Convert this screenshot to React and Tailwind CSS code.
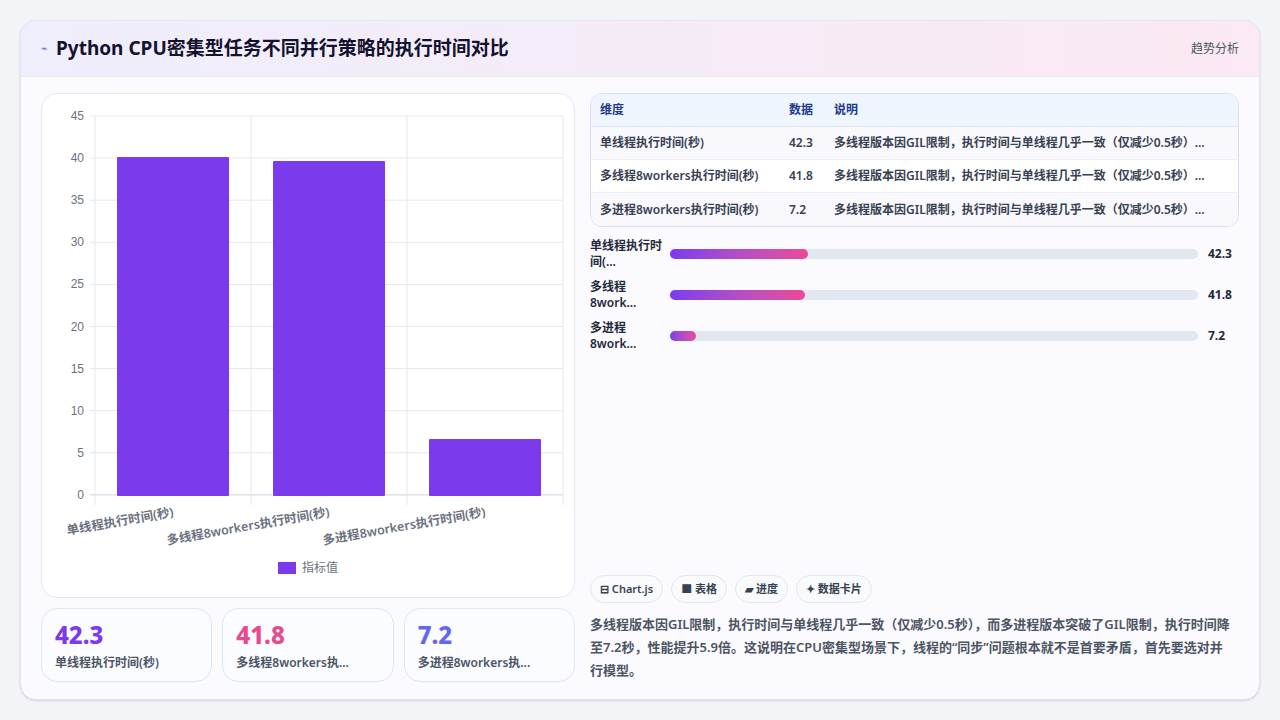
export default function App() {
  const F = { fontFamily: '"Noto Sans", "Noto Sans CJK SC", sans-serif' };
  const rows = [
    ["单线程执行时间(秒)", "42.3"],
    ["多线程8workers执行时间(秒)", "41.8"],
    ["多进程8workers执行时间(秒)", "7.2"],
  ];
  const desc = "多线程版本因GIL限制，执行时间与单线程几乎一致（仅减少0.5秒）...";
  const bars = [
    ["单线程执行时间(...", "42.3", 138],
    ["多线程 8work...", "41.8", 135],
    ["多进程 8work...", "7.2", 26],
  ];
  const gridY = [45, 40, 35, 30, 25, 20, 15, 10, 5, 0];
  return (
    <div style={F} className="w-[1280px] h-[720px] bg-[#f3f4f8] p-5">
      <div className="h-[680px] rounded-2xl border border-[#e3e1f3] bg-[#fbfaff] overflow-hidden flex flex-col shadow-sm">
        <div className="h-[56px] shrink-0 flex items-center justify-between px-5 bg-gradient-to-r from-[#efeefc] to-[#fbe9f3] border-b border-[#ebe6f5]">
          <div className="flex items-center gap-2">
            <span className="text-[#6366f1] text-[11px]">⌁</span>
            <span className="text-[19px] font-bold text-[#14122e]">Python CPU密集型任务不同并行策略的执行时间对比</span>
          </div>
          <span className="text-[12px] text-[#4b5563]">趋势分析</span>
        </div>
        <div className="flex gap-[15px] px-5 pt-4 flex-1">
          <div className="w-[534px] flex flex-col gap-[10px]">
            <div className="h-[505px] rounded-2xl border border-[#e4e7f2] bg-white relative">
              <svg width="534" height="505" className="absolute left-0 top-0">
                {gridY.map((v, i) => {
                  const y = 22 + i * 42.1;
                  return (
                    <g key={v}>
                      <line x1="48" x2="521" y1={y} y2={y} stroke={v === 0 ? "#cbd5e1" : "#e5e7eb"} />
                      <text x="42" y={y + 4} textAnchor="end" fontSize="12" fill="#6b7280" fontFamily="Liberation Sans, sans-serif">{v}</text>
                    </g>
                  );
                })}
                {[53, 209, 365, 521].map((x) => (
                  <line key={x} x1={x} x2={x} y1="22" y2="411" stroke="#e5e7eb" />
                ))}
                <rect x="75" y="63" width="112" height="339" fill="#7c3aed" rx="1" />
                <rect x="231" y="67" width="112" height="335" fill="#7c3aed" rx="1" />
                <rect x="387" y="345" width="112" height="57" fill="#7c3aed" rx="1" />
                {[
                  ["单线程执行时间(秒)", 132],
                  ["多线程8workers执行时间(秒)", 288],
                  ["多进程8workers执行时间(秒)", 444],
                ].map(([t, x]) => (
                  <text key={t} x={x} y="422" textAnchor="end" fontSize="12.5" fontWeight="600" fill="#6b7280" transform={`rotate(-10 ${x} 422)`}>{t}</text>
                ))}
                <rect x="236" y="468" width="18" height="12" fill="#7c3aed" />
                <text x="260" y="478" fontSize="12" fill="#6b7280">指标值</text>
              </svg>
            </div>
            <div className="grid grid-cols-3 gap-[10px]">
              {[
                ["42.3", "单线程执行时间(秒)", "text-[#7c3aed]"],
                ["41.8", "多线程8workers执...", "text-[#e54b8e]"],
                ["7.2", "多进程8workers执...", "text-[#6366f1]"],
              ].map(([v, l, c]) => (
                <div key={v} className="h-[74px] rounded-2xl border border-[#dbe6f6] bg-[#fafcff] px-[13px] pt-[10px]">
                  <div className={`text-[24px] font-extrabold leading-[32px] ${c}`}>{v}</div>
                  <div className="text-[12px] font-semibold text-[#4b5563] mt-[3px]">{l}</div>
                </div>
              ))}
            </div>
          </div>
          <div className="flex-1 flex flex-col">
            <div className="rounded-xl border border-[#d9def0] bg-white overflow-hidden text-[12px]">
              <div className="h-[33px] flex items-center bg-[#eef5ff] border-b border-[#dbe3f1] text-[#1e3a8a] font-semibold px-[9px]">
                <span className="w-[189px]">维度</span><span className="w-[45px]">数据</span><span>说明</span>
              </div>
              {rows.map(([a, b], i) => (
                <div key={a} className={`h-[33px] flex items-center px-[9px] text-[#374151] font-semibold ${i < 2 ? "border-b border-[#eceff5]" : ""} ${i === 1 ? "bg-white" : "bg-[#f8f8fd]"}`}>
                  <span className="w-[189px]">{a}</span><span className="w-[45px]">{b}</span><span>{desc}</span>
                </div>
              ))}
            </div>
            <div className="flex flex-col gap-[12px] mt-[12px]">
              {bars.map(([l, v, w]) => (
                <div key={v} className="flex items-center h-[29px]">
                  <div className="w-[80px] text-[12px] font-semibold leading-[16px] text-[#1f2937] pr-2">{l}</div>
                  <div className="w-[528px] h-[10px] rounded-full bg-[#e2e8f0]">
                    <div className="h-full rounded-full bg-gradient-to-r from-[#7c3aed] to-[#ec4899]" style={{ width: w }} />
                  </div>
                  <div className="ml-[10px] text-[12px] font-bold text-[#1f2937]">{v}</div>
                </div>
              ))}
            </div>
            <div className="mt-auto pb-[17px]">
              <div className="flex gap-[8px] text-[11px] font-semibold text-[#374151]">
                {["⊟ Chart.js", "■ 表格", "▰ 进度", "✦ 数据卡片"].map((t) => (
                  <span key={t} className="h-[28px] px-[9px] flex items-center rounded-full border border-[#e3e6ee] bg-[#f9fafc]">{t}</span>
                ))}
              </div>
              <p className="mt-[10px] text-[13px] font-semibold leading-[23px] text-[#4b5563] pr-2">
                多线程版本因GIL限制，执行时间与单线程几乎一致（仅减少0.5秒），而多进程版本突破了GIL限制，执行时间降至7.2秒，性能提升5.9倍。这说明在CPU密集型场景下，线程的“同步”问题根本就不是首要矛盾，首先要选对并行模型。
              </p>
            </div>
          </div>
        </div>
      </div>
    </div>
  );
}
